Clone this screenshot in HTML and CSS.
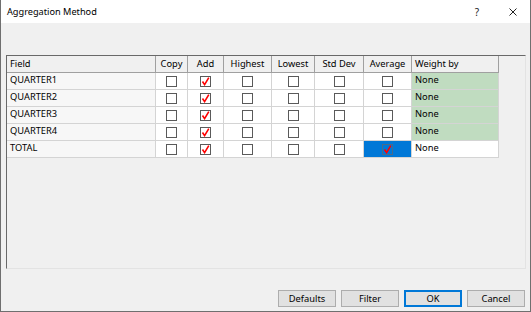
FILE: index.html
```html
<!DOCTYPE html>
<html lang="en">
<head>
    <meta charset="UTF-8">
    <title>Aggregation Method</title>
    <link rel="stylesheet" href="styles.css">
</head>
<body>
    <div class="window">
        <div class="titlebar">
            <span class="title">Aggregation Method</span>
            <span class="help">?</span>
            <svg class="close" width="8" height="8" viewBox="0 0 8 8">
                <path d="M0.5 0.5 L7.5 7.5 M7.5 0.5 L0.5 7.5" stroke="#222" stroke-width="1" fill="none"/>
            </svg>
        </div>

        <div class="grid-frame">
            <div class="grid" id="grid">
                <div class="hcell left">Field</div>
                <div class="hcell">Copy</div>
                <div class="hcell">Add</div>
                <div class="hcell">Highest</div>
                <div class="hcell">Lowest</div>
                <div class="hcell">Std Dev</div>
                <div class="hcell">Average</div>
                <div class="hcell left">Weight by</div>
            </div>
        </div>

        <div class="buttons">
            <button>Defaults</button>
            <button>Filter</button>
            <button class="default">OK</button>
            <button>Cancel</button>
        </div>
    </div>

    <script>
        // rows: field name, then flags for copy, add, highest, lowest, std dev, average
        const rows = [
            ['QUARTER1', 0, 1, 0, 0, 0, 0],
            ['QUARTER2', 0, 1, 0, 0, 0, 0],
            ['QUARTER3', 0, 1, 0, 0, 0, 0],
            ['QUARTER4', 0, 1, 0, 0, 0, 0],
            ['TOTAL', 0, 1, 0, 0, 0, 1]
        ];

        const tick = '<svg width="9" height="9" viewBox="0 0 9 9"><path d="M1.5 4.5 L3.6 7.6 L7.8 0.6" stroke="#f00" stroke-width="1.6" fill="none"/></svg>';

        const grid = document.getElementById('grid');
        rows.forEach((row, i) => {
            const last = i === rows.length - 1;
            let html = '<div class="cell field">' + row[0] + '</div>';
            for (let c = 1; c <= 6; c++) {
                const selected = last && c === 6;
                html += '<div class="cell' + (selected ? ' selected' : '') + '">' +
                    '<span class="check">' + (row[c] ? tick : '') + '</span></div>';
            }
            html += '<div class="cell weight' + (last ? '' : ' green') + '">None</div>';
            grid.insertAdjacentHTML('beforeend', html);
        });
    </script>
</body>
</html>
```

FILE: styles.css
```css
body {
    margin: 0;
    font-family: "Noto Sans", sans-serif;
    font-size: 9.3px;
    color: #000;
}
.window {
    box-sizing: border-box;
    width: 531px;
    height: 312px;
    background: #f0f0f0;
    border: 1px solid #6f6f6f;
    border-top: none;
    display: flex;
    flex-direction: column;
}
.titlebar {
    height: 23px;
    background: white;
    display: flex;
    align-items: center;
    padding-left: 6px;
}
.title {
    font-size: 9.2px;
    flex: 1;
}
.help {
    font-size: 10px;
    color: #222;
    margin-right: 30px;
}
.close {
    margin-right: 13px;
}
.grid-frame {
    box-sizing: border-box;
    height: 214px;
    margin: 32px 4px 0 5px;
    border: 1px solid #e3e3e3;
    border-top-color: #696969;
    border-left-color: #696969;
    background: #f0f0f0;
}
.grid {
    display: grid;
    grid-template-columns: 149px 32px 36px 48px 43px 49px 48px 87px;
    grid-auto-rows: 17px;
}
.hcell, .cell {
    box-sizing: border-box;
    border-right: 1px solid #d4d4d4;
    border-bottom: 1px solid #d4d4d4;
    display: flex;
    align-items: center;
    justify-content: center;
    white-space: nowrap;
    overflow: hidden;
}
.hcell {
    background: #f0f0f0;
    border-color: #a0a0a0;
    padding-bottom: 2px;
}
.hcell.left {
    justify-content: flex-start;
    padding-left: 3px;
}
.cell {
    background: white;
}
.cell.field {
    justify-content: flex-start;
    padding: 0 0 3px 3px;
    background: #f7f7f7;
}
.cell.weight {
    justify-content: flex-start;
    padding: 0 0 3px 3px;
}
.cell.green {
    background: #c0dcc0;
}
.cell.selected {
    background: #0078d7;
}
.check {
    box-sizing: border-box;
    width: 11px;
    height: 11px;
    border: 1px solid #5a5a5a;
    background: white;
    display: flex;
    align-items: center;
    justify-content: center;
}
.selected .check {
    background: #0078d7;
    border-color: #4a6a8a;
}
.buttons {
    display: flex;
    justify-content: flex-end;
    gap: 5px;
    margin: 21px 5px 0 0;
}
button {
    box-sizing: border-box;
    width: 58px;
    height: 17px;
    padding: 0;
    font-family: "Noto Sans", sans-serif;
    font-size: 9.3px;
    background: #e1e1e1;
    border: 1px solid #adadad;
    color: #000;
}
button.default {
    border: 2px solid #0078d7;
}
```
